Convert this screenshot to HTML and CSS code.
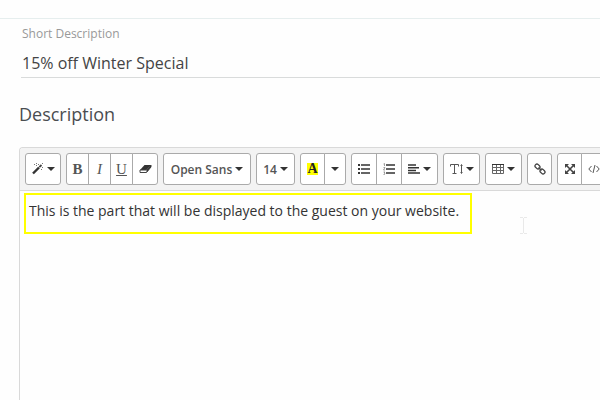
FILE: index.html
```
<!DOCTYPE html>
<html lang="en">
<head>
  <meta charset="UTF-8" />
  <meta name="viewport" content="width=device-width, initial-scale=1.0"/>
  <title>Edit Special</title>
  <link rel="stylesheet" href="styles.css">
</head>
<body>

  <main class="form">
    <div class="field">
      <label for="shortDescription">Short Description</label>
      <input type="text" id="shortDescription" value="15% off Winter Special">
    </div>

    <h2 id="descriptionTitle">Description</h2>

    <div class="editor">
      <div class="toolbar">
        <div class="btn-group">
          <button type="button" class="btn btn-style" aria-label="Style">
            <svg width="12" height="12" viewBox="0 0 12 12"><path d="M1 10.500 7 4.500" stroke="#333" stroke-width="2.400"/><path d="M7.300 4.200 9.500 2" stroke="#444" stroke-width="1.800"/><path d="M2 1.500h1M4 .5h1M6 1.500h1M4 2.500h1M10 .5h1M10 4.500h1M9 6.500h1" stroke="#777"/></svg>
            <span class="caret"></span>
          </button>
        </div>

        <div class="btn-group">
          <button type="button" class="btn btn-format bold">B</button>
          <button type="button" class="btn btn-format italic">I</button>
          <button type="button" class="btn btn-format underline">U</button>
          <button type="button" class="btn btn-clear" aria-label="Remove font style">
            <svg width="13" height="10" viewBox="0 0 13 10"><path d="M5.500 1H12L7.500 6H1z" fill="#333"/><path d="M1 6h6.500L12 1v2L7.500 8.500H1z" fill="#fff" stroke="#444" stroke-linejoin="round"/><path d="M7.500 6 12 1v2L7.500 8.500z" fill="#333"/></svg>
          </button>
        </div>

        <div class="btn-group">
          <button type="button" class="btn btn-font">Open Sans <span class="caret"></span></button>
        </div>

        <div class="btn-group">
          <button type="button" class="btn btn-size">14 <span class="caret"></span></button>
        </div>

        <div class="btn-group">
          <button type="button" class="btn btn-color" aria-label="Recent color"><span class="swatch">A</span></button>
          <button type="button" class="btn btn-more" aria-label="More colors"><span class="caret"></span></button>
        </div>

        <div class="btn-group">
          <button type="button" class="btn btn-list" aria-label="Unordered list">
            <svg width="12" height="10" viewBox="0 0 12 10"><path d="M0 1h2M0 5h2M0 9h2" stroke="#333" stroke-width="2"/><path d="M3 1h9M3 5h9M3 9h9" stroke="#333" stroke-width="1.500"/></svg>
          </button>
          <button type="button" class="btn btn-list" aria-label="Ordered list">
            <svg width="12" height="12" viewBox="0 0 12 12"><path d="M.5 1 1.500.5v2.500M.5 4.500h1.500L.5 7H2M.5 9H2L1 10l1 .5-.5 1h-1" fill="none" stroke="#888" stroke-width=".8"/><path d="M3 2h9M3 6h9M3 10h9" stroke="#333" stroke-width="1.500"/></svg>
          </button>
          <button type="button" class="btn btn-menu" aria-label="Paragraph">
            <svg width="12" height="10" viewBox="0 0 12 10"><path d="M0 1h8M0 3.700h11M0 6.400h8M0 9h12" stroke="#333" stroke-width="1.500"/></svg>
            <span class="caret"></span>
          </button>
        </div>

        <div class="btn-group">
          <button type="button" class="btn btn-menu" aria-label="Line height">
            <svg width="13" height="12" viewBox="0 0 13 12"><path d="M.5 3.500V1.500h8v2M4.500 1.500v9M2.500 10.500h4" fill="none" stroke="#555"/><path d="M11.500 2v8M10.500 2.500l1-1 1 1M10.500 9.500l1 1 1-1" fill="none" stroke="#555"/></svg>
            <span class="caret"></span>
          </button>
        </div>

        <div class="btn-group">
          <button type="button" class="btn btn-menu" aria-label="Table">
            <svg width="12" height="10" viewBox="0 0 12 10"><path d="M.5.5h11v9H.5zM.5 3.500h11M.5 6.500h11M4.500.5v9M8.500.5v9" fill="none" stroke="#666"/><path d="M0 .5h12" stroke="#333"/></svg>
            <span class="caret"></span>
          </button>
        </div>

        <div class="btn-group">
          <button type="button" class="btn btn-icon" aria-label="Link">
            <svg width="12" height="12" viewBox="0 0 12 12"><g fill="none" stroke="#444" stroke-width="1.300"><rect x="-2.700" y="-1.900" width="5.400" height="3.800" rx="1.900" transform="translate(3.500 3.500) rotate(45)"/><rect x="-2.700" y="-1.900" width="5.400" height="3.800" rx="1.900" transform="translate(8.500 8.500) rotate(45)"/><path d="m4.500 4.500 3 3"/></g></svg>
          </button>
        </div>

        <div class="btn-group">
          <button type="button" class="btn btn-icon" aria-label="Full screen">
            <svg width="12" height="12" viewBox="0 0 12 12"><path d="m2 2 8 8M10 2l-8 8" stroke="#444" stroke-width="1.600"/><path d="M1 1h4L1 5zM11 1v4L7 1zM1 11V7l4 4zM11 11H7l4-4z" fill="#444"/></svg>
          </button>
          <button type="button" class="btn btn-list" aria-label="Code view">
            <svg width="12" height="10" viewBox="0 0 12 10"><path d="M3.500 2 .8 5l2.700 3M8.500 2l2.700 3-2.700 3M7 1 5 9" fill="none" stroke="#555"/></svg>
          </button>
        </div>
      </div>

      <div class="editable" contenteditable="true" spellcheck="false" role="textbox" aria-labelledby="descriptionTitle">
        <p class="highlight">This is the part that will be displayed to the guest on your website.</p>
        <svg class="pointer" width="7" height="17" viewBox="0 0 7 17"><path d="M0 .5h3M4 .5h3M3.500 1v15M0 16.500h3M4 16.500h3" fill="none" stroke="#e9e9e9"/></svg>
      </div>
    </div>
  </main>

</body>
</html>
```
FILE: styles.css
```
/* Base styles */
* {
  margin: 0;
  padding: 0;
  box-sizing: border-box;
}

body {
  min-height: 100vh;
  padding-top: 18px;
  background-color: #fefefe;
  font-family: "Open Sans", sans-serif;
  color: #333;
  display: flex;
  flex-direction: column;
  overflow-x: hidden;
}

.form {
  flex: 1;
  display: flex;
  flex-direction: column;
  padding: 6px 0 0 19px;
  border-top: 1px solid #e6eeee;
}

/* Short description */
.field {
  margin-left: 2px;
}

.field label {
  display: block;
  padding-left: 1px;
  font-size: 12px;
  line-height: 18px;
  color: #999;
}

.field input {
  display: block;
  width: 100%;
  height: 35px;
  padding: 6px 1px 0;
  border: none;
  border-bottom: 1px solid #d9dbdb;
  background: transparent;
  font-family: inherit;
  font-size: 16px;
  color: #444;
  outline: none;
}

h2 {
  margin: 24px 0 21px;
  font-size: 18px;
  font-weight: 400;
  line-height: 24px;
  color: #4a4d50;
}

/* Editor */
.editor {
  flex: 1;
  display: flex;
  flex-direction: column;
  border: 1px solid #d9d9d9;
  border-width: 1px 0 0 1px;
  border-top-left-radius: 4px;
  overflow: hidden;
}

.toolbar {
  display: flex;
  gap: 5px;
  padding: 5px;
  background-color: #f3f3f3;
  border-bottom: 1px solid #d9d9d9;
  overflow: hidden;
}

.btn-group {
  display: flex;
  flex: none;
}

.btn {
  display: flex;
  align-items: center;
  justify-content: center;
  gap: 3px;
  height: 32px;
  margin-left: -1px;
  border: 1px solid #aaa;
  background-color: #fff;
  font-family: "Open Sans", sans-serif;
  font-size: 12px;
  font-weight: 600;
  color: #555;
  cursor: pointer;
}

.btn:first-child {
  margin-left: 0;
  border-radius: 3px 0 0 3px;
}

.btn:last-child {
  border-radius: 0 3px 3px 0;
}

.btn:only-child {
  border-radius: 3px;
}

.btn-style {
  width: 36px;
}

.btn-menu {
  width: 37px;
}

.btn-format {
  width: 23px;
  font-family: "Liberation Serif", serif;
  font-size: 15px;
  font-weight: 400;
}

.bold {
  font-weight: 700;
}

.italic {
  font-style: italic;
}

.underline {
  text-decoration: underline;
}

.btn-clear {
  width: 26px;
}

.btn-font {
  width: 88px;
}

.btn-size {
  width: 39px;
}

.btn-color {
  width: 25px;
}

.btn-more {
  width: 22px;
}

.btn-list {
  width: 26px;
}

.btn-icon {
  width: 25px;
}

.caret {
  border: 4px solid transparent;
  border-top-color: #333;
  border-bottom: none;
}

.swatch {
  width: 11px;
  background-color: #ff0;
  font-family: "Liberation Serif", serif;
  font-size: 14px;
  font-weight: 700;
  line-height: 12px;
  color: #222;
}

.editable {
  position: relative;
  flex: 1;
  padding: 2px 4px;
  font-size: 14px;
  color: #333;
  outline: none;
}

.highlight {
  width: fit-content;
  padding: 6px 11px 11px 3px;
  border: 2px solid #ff0;
  line-height: 20px;
}

/* Text pointer */
.pointer {
  position: absolute;
  left: 500px;
  top: 26px;
}
```
